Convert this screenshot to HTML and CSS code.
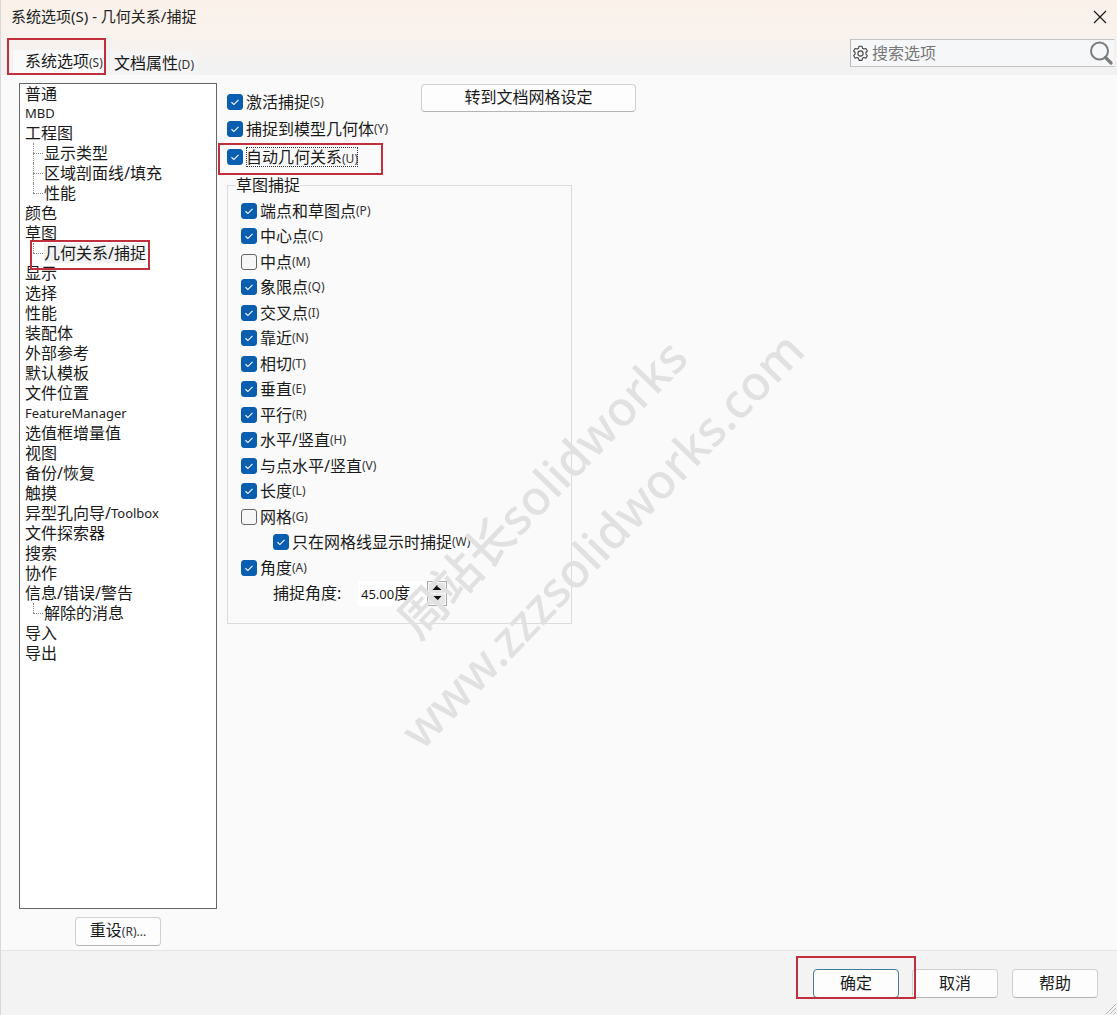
FILE: index.html
```html
<!DOCTYPE html>
<html lang="zh">
<head>
<meta charset="utf-8">
<title>系统选项</title>
<link rel="stylesheet" href="styles.css">
</head>
<body>
<div class="dialog">
  <div class="head">
    <div class="titlebar">
      <span class="title">系统选项(S) - 几何关系/捕捉</span>
      <svg class="close" width="14" height="14" viewBox="0 0 14 14"><path d="M1 1L13 13M13 1L1 13" stroke="#1a1a1a" stroke-width="1.2" fill="none"/></svg>
    </div>
    <div class="tabbar">
      <div class="tab active">系统选项<small>(S)</small></div>
      <div class="tab">文档属性<small>(D)</small></div>
      <div class="search">
        <svg class="gear" width="17" height="17" viewBox="0 0 17 17" fill="none" stroke="#444" stroke-width="1.1" stroke-linejoin="round"><circle cx="8.500" cy="8.500" r="2.600"/><path d="M7 1.200h3l.5 2.100 1.400.8 2-.7 1.500 2.600-1.500 1.500v1.600l1.500 1.500-1.500 2.600-2-.7-1.400.8-.5 2.100H7l-.5-2.100-1.400-.8-2 .7-1.500-2.600 1.500-1.500V7.500L1.600 6l1.500-2.600 2 .7 1.400-.8z"/></svg>
        <span class="search-text">搜索选项</span>
        <svg class="lens" width="24" height="24" viewBox="0 0 24 24" fill="none" stroke="#7d7d7d"><circle cx="10.500" cy="10" r="8.500" stroke-width="2"/><path d="M16.500 16.500L22 22" stroke-width="3.200" stroke-linecap="round"/></svg>
      </div>
    </div>
  </div>

  <div class="main">
    <div class="side">
      <div class="tree">
        <div class="node">普通</div>
        <div class="node latin">MBD</div>
        <div class="node">工程图</div>
        <div class="node child"><i class="twig more"></i>显示类型</div>
        <div class="node child"><i class="twig more"></i>区域剖面线/填充</div>
        <div class="node child"><i class="twig"></i>性能</div>
        <div class="node">颜色</div>
        <div class="node">草图</div>
        <div class="node child"><i class="twig"></i><span class="selected">几何关系/捕捉</span></div>
        <div class="node">显示</div>
        <div class="node">选择</div>
        <div class="node">性能</div>
        <div class="node">装配体</div>
        <div class="node">外部参考</div>
        <div class="node">默认模板</div>
        <div class="node">文件位置</div>
        <div class="node latin">FeatureManager</div>
        <div class="node">选值框增量值</div>
        <div class="node">视图</div>
        <div class="node">备份/恢复</div>
        <div class="node">触摸</div>
        <div class="node">异型孔向导/<span class="latin-inline">Toolbox</span></div>
        <div class="node">文件探索器</div>
        <div class="node">搜索</div>
        <div class="node">协作</div>
        <div class="node">信息/错误/警告</div>
        <div class="node child"><i class="twig"></i>解除的消息</div>
        <div class="node">导入</div>
        <div class="node">导出</div>
      </div>
      <button class="btn reset">重设<small>(R)...</small></button>
    </div>

    <div class="panel">
      <div class="top">
        <div class="top-checks">
          <div class="check"><i class="box on"><svg viewBox="0 0 16 16"><path d="M4 8.300l2.700 2.600L12 5.500"/></svg></i>激活捕捉<small>(S)</small></div>
          <div class="check"><i class="box on"><svg viewBox="0 0 16 16"><path d="M4 8.300l2.700 2.600L12 5.500"/></svg></i>捕捉到模型几何体<small>(Y)</small></div>
          <div class="check"><i class="box on"><svg viewBox="0 0 16 16"><path d="M4 8.300l2.700 2.600L12 5.500"/></svg></i><span class="focus">自动几何关系<small>(U)</small></span></div>
        </div>
        <button class="btn grid-btn">转到文档网格设定</button>
      </div>

      <fieldset class="group">
        <legend>草图捕捉</legend>
        <div class="check"><i class="box on"><svg viewBox="0 0 16 16"><path d="M4 8.300l2.700 2.600L12 5.500"/></svg></i>端点和草图点<small>(P)</small></div>
        <div class="check"><i class="box on"><svg viewBox="0 0 16 16"><path d="M4 8.300l2.700 2.600L12 5.500"/></svg></i>中心点<small>(C)</small></div>
        <div class="check"><i class="box"></i>中点<small>(M)</small></div>
        <div class="check"><i class="box on"><svg viewBox="0 0 16 16"><path d="M4 8.300l2.700 2.600L12 5.500"/></svg></i>象限点<small>(Q)</small></div>
        <div class="check"><i class="box on"><svg viewBox="0 0 16 16"><path d="M4 8.300l2.700 2.600L12 5.500"/></svg></i>交叉点<small>(I)</small></div>
        <div class="check"><i class="box on"><svg viewBox="0 0 16 16"><path d="M4 8.300l2.700 2.600L12 5.500"/></svg></i>靠近<small>(N)</small></div>
        <div class="check"><i class="box on"><svg viewBox="0 0 16 16"><path d="M4 8.300l2.700 2.600L12 5.500"/></svg></i>相切<small>(T)</small></div>
        <div class="check"><i class="box on"><svg viewBox="0 0 16 16"><path d="M4 8.300l2.700 2.600L12 5.500"/></svg></i>垂直<small>(E)</small></div>
        <div class="check"><i class="box on"><svg viewBox="0 0 16 16"><path d="M4 8.300l2.700 2.600L12 5.500"/></svg></i>平行<small>(R)</small></div>
        <div class="check"><i class="box on"><svg viewBox="0 0 16 16"><path d="M4 8.300l2.700 2.600L12 5.500"/></svg></i>水平/竖直<small>(H)</small></div>
        <div class="check"><i class="box on"><svg viewBox="0 0 16 16"><path d="M4 8.300l2.700 2.600L12 5.500"/></svg></i>与点水平/竖直<small>(V)</small></div>
        <div class="check"><i class="box on"><svg viewBox="0 0 16 16"><path d="M4 8.300l2.700 2.600L12 5.500"/></svg></i>长度<small>(L)</small></div>
        <div class="check"><i class="box"></i>网格<small>(G)</small></div>
        <div class="check sub"><i class="box on"><svg viewBox="0 0 16 16"><path d="M4 8.300l2.700 2.600L12 5.500"/></svg></i>只在网格线显示时捕捉<small>(W)</small></div>
        <div class="check"><i class="box on"><svg viewBox="0 0 16 16"><path d="M4 8.300l2.700 2.600L12 5.500"/></svg></i>角度<small>(A)</small></div>
        <div class="angle">
          <span class="angle-label">捕捉角度:</span>
          <div class="spin">
            <span class="spin-value"><span class="num">45.00</span>度</span>
            <div class="spin-btns">
              <span class="spin-step"><svg width="10" height="7" viewBox="0 0 10 7"><path d="M5 1L9.500 6H.5z" fill="#111"/></svg></span>
              <span class="spin-step"><svg width="10" height="7" viewBox="0 0 10 7"><path d="M.5 1H9.500L5 6z" fill="#111"/></svg></span>
            </div>
          </div>
        </div>
      </fieldset>
    </div>
  </div>

  <div class="footer">
    <button class="btn ok">确定</button>
    <button class="btn">取消</button>
    <button class="btn">帮助</button>
  </div>

  <svg class="grip" width="14" height="14" viewBox="0 0 14 14"><path d="M13 3L3 13M13 7L7 13M13 11L11 13" stroke="#b5b5b5" fill="none"/></svg>

  <div class="watermark wm-a">周站长solidworks</div>
  <div class="watermark wm-b">www.zzzsolidworks.com</div>

  <div class="mark mark-tab"></div>
  <div class="mark mark-auto"></div>
  <div class="mark mark-node"></div>
  <div class="mark mark-ok"></div>
</div>
</body>
</html>
```
FILE: styles.css
```css
* { box-sizing: border-box; }
html, body { margin: 0; padding: 0; }
body {
  background: #f3f3f3;
  color: #1a1a1a;
  font-family: "Noto Sans", "Noto Sans CJK SC", sans-serif;
  font-size: 16px;
}
small { font-size: 12px; color: #333; }
.dialog {
  position: relative;
  width: 1117px;
  height: 1015px;
  display: flex;
  flex-direction: column;
  overflow: hidden;
  border-left: 1px solid #d8d8d8;
}
.head { background: linear-gradient(180deg, #faf2ea 0, #f9f2ed 34px, #f1f2f3 75px); }
.titlebar {
  height: 37px;
  display: flex;
  align-items: center;
  justify-content: space-between;
  padding: 0 10px 5px 10px;
}
.title { font-size: 15px; line-height: 20px; color: #222; }
.close { display: block; margin-top: 1px; }
.tabbar {
  height: 38px;
  display: flex;
  align-items: flex-end;
  padding-left: 12px;
  position: relative;
}
.tab {
  height: 24px;
  line-height: 24px;
  padding: 0 3px 0 6px;
  white-space: nowrap;
}
.tab.active {
  width: 93px;
  height: 25px;
  padding-left: 12px;
  padding-bottom: 2px;
  line-height: 22px;
  background: #fafafa;
}
.tab:not(.active) { background: #f4f4f4; margin-left: 2px; width: 90px; height: 24px; }
.search {
  margin-left: auto;
  margin-right: 2px;
  margin-bottom: 8px;
  width: 265px;
  height: 28px;
  border: 1px solid #c4c4c4;
  border-right-color: #efefef;
  border-left-color: #b8b8b8;
  background: #f6f7f8;
  display: flex;
  align-items: center;
  padding: 0 1px 0 1px;
}
.gear { margin-right: 3px; }
.search-text { color: #777; font-size: 16px; line-height: 20px; }
.lens { margin-left: auto; }
.main {
  flex: 1;
  background: #fafafa;
  display: flex;
  padding: 8px 0 0 18px;
  border-bottom: 1px solid #e4e4e4;
}
.side { width: 198px; display: flex; flex-direction: column; align-items: center; }
.tree {
  width: 198px;
  height: 826px;
  background: #fff;
  border: 1px solid #666;
  padding: 0 0 0 5px;
}
.node {
  height: 20px;
  line-height: 20px;
  display: flex;
  align-items: center;
  white-space: nowrap;
}
.node:first-child { height: 19px; }
.node.latin { font-size: 13px; color: #222; }
.latin-inline { font-size: 13px; }
.twig {
  position: relative;
  display: block;
  flex: none;
  width: 11px;
  height: 20px;
  margin: 0 0 0 8px;
}
.twig::before {
  content: "";
  position: absolute;
  left: 0;
  top: 0;
  height: 10px;
  border-left: 1px dotted #888;
}
.twig.more::before { height: 20px; }
.twig::after {
  content: "";
  position: absolute;
  left: 0;
  top: 10px;
  width: 10px;
  border-top: 1px dotted #888;
}
.selected { background: #f2f2f2; }
.btn {
  width: 86px;
  height: 29px;
  padding: 0 0 2px;
  border: 1px solid #d0d0d0;
  border-bottom-color: #b4b4b4;
  border-radius: 4px;
  background: #fdfdfd;
  color: #1a1a1a;
  font-family: inherit;
  font-size: 16px;
  line-height: 20px;
}
.reset { margin-top: 8px; }
.panel { margin-left: 10px; width: 345px; display: flex; flex-direction: column; }
.top { display: flex; align-items: flex-start; }
.top-checks { width: 194px; flex: none; padding-top: 5px; }
.grid-btn { width: 215px; height: 28px; margin-top: 1px; flex: none; }
.check {
  height: 27.500px;
  display: flex;
  align-items: center;
  white-space: nowrap;
  line-height: 20px;
}
.box {
  flex: none;
  width: 16px;
  height: 16px;
  margin-right: 3px;
  border-radius: 3px;
  border: 1px solid #666;
  background: #f6f6f6;
  display: block;
}
.box.on { background: #0a5eb0; border-color: #0a5eb0; }
.box svg {
  display: block;
  width: 14px;
  height: 14px;
  fill: none;
  stroke: #fff;
  stroke-width: 1.300;
}
.focus { outline: 1px dotted #333; outline-offset: -1px; height: 20px; }
.group {
  margin: 4.500px 0 0;
  width: 345px;
  height: 449px;
  padding: 3px 0 0 13px;
  border: 1px solid #dcdcdc;
}
.group legend {
  padding: 0;
  margin-left: -5px;
  height: 20px;
  line-height: 20px;
  font-size: 16px;
}
.group .check { height: 25.500px; }
.group .check.sub { padding-left: 32px; }
.group .box { margin-right: 3px; }
.angle {
  height: 25.500px;
  display: flex;
  align-items: center;
  padding-left: 32px;
}
.angle-label { width: 85px; flex: none; line-height: 20px; }
.spin {
  width: 89px;
  height: 25px;
  background: #fff;
  display: flex;
  align-items: center;
  justify-content: space-between;
  padding-left: 3px;
  line-height: 20px;
}
.num { font-size: 13px; }
.spin-btns {
  width: 20px;
  height: 25px;
  border: 1px solid #aaa;
  background: #fafafa;
  padding: 1px;
  display: flex;
  flex-direction: column;
  gap: 1px;
}
.spin-step {
  flex: 1;
  min-height: 0;
  background: #e6e6e6;
  display: flex;
  align-items: center;
  justify-content: center;
}
.spin-step svg { display: block; }
.footer {
  height: 64px;
  background: #f3f3f3;
  display: flex;
  justify-content: flex-end;
  gap: 13px;
  padding: 18px 19px 0 0;
  flex: none;
}
.footer .btn:first-child + .btn { margin-right: 1px; }
.ok { border-color: #3f7d95; }
.grip { position: absolute; right: 0; bottom: 0; }
.watermark {
  position: absolute;
  color: #e1e1e1;
  font-family: "Noto Sans", "Noto Sans CJK SC", sans-serif;
  font-weight: 500;
  white-space: nowrap;
  transform-origin: 0 50%;
  transform: rotate(-46deg);
  line-height: 1;
  pointer-events: none;
}
.wm-a { left: 405px; top: 605px; font-size: 48px; }
.wm-b { left: 408px; top: 715px; font-size: 48px; }
.mark {
  position: absolute;
  border: 2px solid #c22f3c;
  pointer-events: none;
}
.mark-tab { left: 6px; top: 38px; width: 99px; height: 37px; }
.mark-auto { left: 217px; top: 143px; width: 165px; height: 32px; }
.mark-node { left: 29px; top: 240px; width: 120px; height: 30px; }
.mark-ok { left: 795px; top: 956px; width: 120px; height: 43px; }
```
